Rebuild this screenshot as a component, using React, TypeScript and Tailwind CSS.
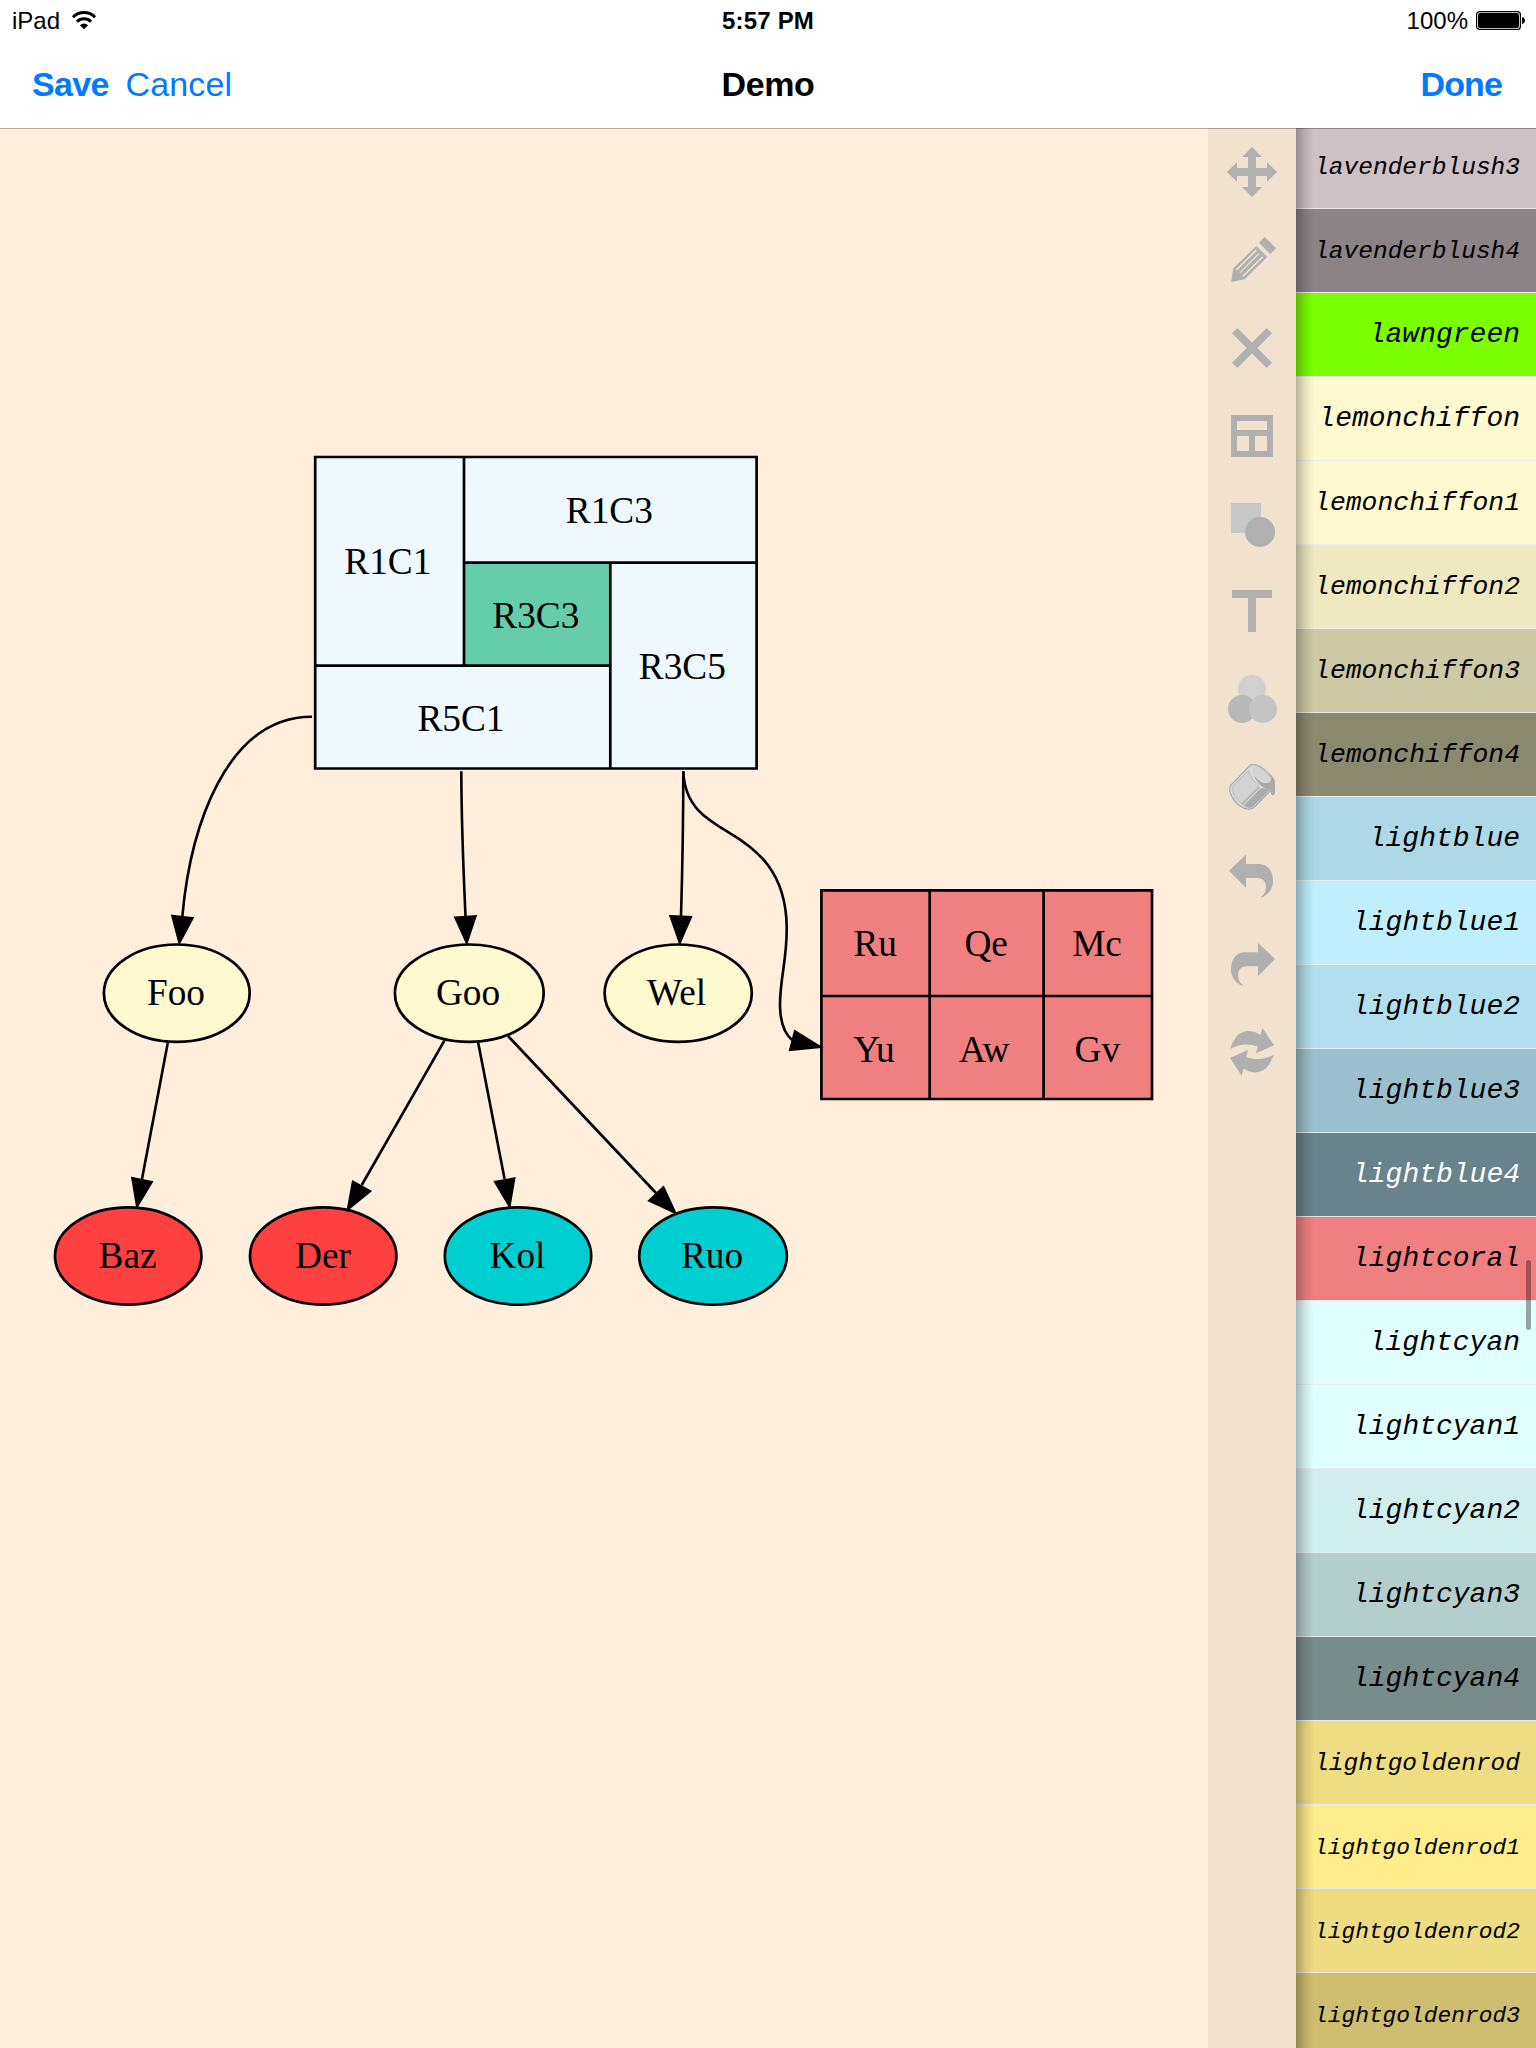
import React from "react";

type Swatch = { name: string; row: string; size: string };

const swatches: Swatch[] = [
  { name: "lavenderblush3", row: "bg-[#cdc1c5] text-black", size: "pt-[4px] text-[24.5px]" },
  { name: "lavenderblush4", row: "bg-[#8b8386] text-black", size: "pt-[4px] text-[24.5px]" },
  { name: "lawngreen", row: "bg-[#7cff00] text-black", size: "pt-px text-[28px]" },
  { name: "lemonchiffon", row: "bg-[#fff9d0] text-black", size: "pt-px text-[28px]" },
  { name: "lemonchiffon1", row: "bg-[#fff9d0] text-black", size: "pt-[3px] text-[26.4px]" },
  { name: "lemonchiffon2", row: "bg-[#eee9bf] text-black", size: "pt-[3px] text-[26.4px]" },
  { name: "lemonchiffon3", row: "bg-[#cdc9a5] text-black", size: "pt-[3px] text-[26.4px]" },
  { name: "lemonchiffon4", row: "bg-[#8b8970] text-black", size: "pt-[3px] text-[26.4px]" },
  { name: "lightblue", row: "bg-[#add8e6] text-black", size: "pt-px text-[28px]" },
  { name: "lightblue1", row: "bg-[#bfefff] text-black", size: "pt-px text-[28px]" },
  { name: "lightblue2", row: "bg-[#b2dfee] text-black", size: "pt-px text-[28px]" },
  { name: "lightblue3", row: "bg-[#9ac0cd] text-black", size: "pt-px text-[28px]" },
  { name: "lightblue4", row: "bg-[#68838b] text-white", size: "pt-px text-[28px]" },
  { name: "lightcoral", row: "bg-[#f08080] text-black", size: "pt-px text-[28px]" },
  { name: "lightcyan", row: "bg-[#e0ffff] text-black", size: "pt-px text-[28px]" },
  { name: "lightcyan1", row: "bg-[#e0ffff] text-black", size: "pt-px text-[28px]" },
  { name: "lightcyan2", row: "bg-[#d1eeee] text-black", size: "pt-px text-[28px]" },
  { name: "lightcyan3", row: "bg-[#b4cdcd] text-black", size: "pt-px text-[28px]" },
  { name: "lightcyan4", row: "bg-[#7a8b8b] text-black", size: "pt-px text-[28px]" },
  { name: "lightgoldenrod", row: "bg-[#eedd82] text-black", size: "pt-[4px] text-[24.5px]" },
  { name: "lightgoldenrod1", row: "bg-[#ffec8b] text-black", size: "pt-[4px] text-[22.9px]" },
  { name: "lightgoldenrod2", row: "bg-[#eedc82] text-black", size: "pt-[4px] text-[22.9px]" },
  { name: "lightgoldenrod3", row: "bg-[#cdbe70] text-black", size: "pt-[4px] text-[22.9px]" },
];

function ToolIcon({ children }: { children: React.ReactNode }) {
  return (
    <button className="block size-[88px] shrink-0">
      <svg viewBox="0 0 88 88" className="block size-full" fill="#b0b0b0">
        {children}
      </svg>
    </button>
  );
}

const undoPath =
  "M21 38.7 38 22.7V32H51C60 32 65.3 39.5 65 49.7C64.6 57.5 60 64 52 65.7C55.5 63.5 58 60 58 54.5C57.7 49 54.5 46 49 46H38V55.7Z";
const cyclePath =
  "M22.3 40.7C26 30 31 23 41 23C46 23 49.5 25.3 52.7 27L54.3 19.7 66 37.3 48 45.3 49.7 38.5C40 35 31 36 22.3 40.7Z";

function Toolbar() {
  return (
    <nav className="flex w-[88px] shrink-0 flex-col bg-[#f1e2d0]">
      <ToolIcon>
        <path d="M44 19 54 29H48V40H59V34.2L69 44 59 53.8V48H48V59H54L44 69 34 59H40V48H29V53.8L19 44 29 34.2V40H40V29H34Z" />
      </ToolIcon>
      <ToolIcon>
        <path d="M56.7 21 68 32.3 62.3 38.3 51 26.7Z" />
        <path d="M48.3 30 59.3 41 36.7 63.3 23 66 25.3 52.3Z" />
        <path
          d="M48.3 34 28.3 54M54.8 40.8 35 60.3"
          stroke="#f1e2d0"
          strokeWidth="1.6"
          fill="none"
        />
        <path d="M51 37.5 31.8 56.8" stroke="#f1e2d0" strokeWidth="1.1" fill="none" />
      </ToolIcon>
      <ToolIcon>
        <path d="M26.7 26.7 61.3 61.3M61.3 26.7 26.7 61.3" stroke="#b0b0b0" strokeWidth="7.5" />
      </ToolIcon>
      <ToolIcon>
        <path
          fillRule="evenodd"
          d="M23 23H65V65H23ZM29 29V38H59V29ZM29 44V59H41V44ZM47 44V59H59V44Z"
        />
      </ToolIcon>
      <ToolIcon>
        <rect x="23" y="23" width="30" height="30" fill="#c7c7c7" />
        <circle cx="52" cy="52" r="15" />
      </ToolIcon>
      <ToolIcon>
        <path d="M24 22H64V30H48V64H40V30H24Z" />
      </ToolIcon>
      <ToolIcon>
        <circle cx="44" cy="33" r="14" fill="#d0d0d0" />
        <circle cx="34" cy="53" r="14" fill="#b9b9b9" />
        <circle cx="55" cy="53" r="14" fill="#c4c4c4" />
      </ToolIcon>
      <ToolIcon>
        <path
          d="M43 20.5 22.5 41.5C19 49.5 30 65.5 41.5 65.2 45 65.2 46 63.5 47.5 62L66 43Z"
          fill="#dcdcdc"
          stroke="#a9a9a9"
          strokeWidth="1.2"
        />
        <path d="M40.5 26.5 25 42C23 48 28.5 55.5 33 59.5L51 41.5C45.5 37.5 42.5 33 40.5 26.5Z" fill="#d3d3d3" stroke="#b2b2b2" strokeWidth=".7" />
        <path d="M51.5 43 34 60.5" stroke="#a9a9a9" strokeWidth="1.2" />
        <path d="M53 44 35.5 61.5C38.5 63.8 42.5 64.8 45 62.8L62.5 45.5Z" fill="#acacac" />
        <path d="M43 20.5C45 36 54 45.5 62 45.5L63 50C64.5 52.5 67 51 67 49V37.5C65 31 54 19.5 43 20.5Z" fill="#aaa" />
        <ellipse cx="53" cy="29.2" rx="12" ry="6.5" transform="rotate(44 53 29.2)" fill="#d4d4d4" stroke="#e2e2e2" strokeWidth=".8" />
        <path d="M43 21C48 19 60 26 66 38" fill="none" stroke="#a5a5a5" strokeWidth="1" />
      </ToolIcon>
      <ToolIcon>
        <path d={undoPath} />
      </ToolIcon>
      <ToolIcon>
        <path d={undoPath} transform="matrix(-1 0 0 1 88 .2)" />
      </ToolIcon>
      <ToolIcon>
        <path d={cyclePath} />
        <path d={cyclePath} transform="rotate(180 44 43.7)" />
      </ToolIcon>
    </nav>
  );
}

const ellipses = [
  { label: "Foo", cx: 176.8, cy: 993.2, rx: 72.9, fill: "#fff9d0", tx: 176 },
  { label: "Goo", cx: 469.3, cy: 993.2, rx: 74.4, fill: "#fff9d0", tx: 468 },
  { label: "Wel", cx: 678.2, cy: 993.2, rx: 73.6, fill: "#fff9d0", tx: 676.6 },
  { label: "Baz", cx: 128.2, cy: 1256, rx: 73.2, fill: "#ff4040", tx: 127.5 },
  { label: "Der", cx: 323.2, cy: 1256, rx: 73.2, fill: "#ff4040", tx: 323 },
  { label: "Kol", cx: 518, cy: 1256, rx: 73.2, fill: "#00ced1", tx: 517.5 },
  { label: "Ruo", cx: 713, cy: 1256, rx: 73.8, fill: "#00ced1", tx: 712 },
];

const cells = [
  { label: "R1C1", x: 387.8, y: 574 },
  { label: "R1C3", x: 609.3, y: 522.8 },
  { label: "R3C3", x: 535.8, y: 627.8 },
  { label: "R3C5", x: 682.3, y: 678.8 },
  { label: "R5C1", x: 461, y: 730.6 },
  { label: "Ru", x: 875.2, y: 955.8 },
  { label: "Qe", x: 986.2, y: 955.8 },
  { label: "Mc", x: 1097, y: 955.8 },
  { label: "Yu", x: 874, y: 1061.8 },
  { label: "Aw", x: 984.3, y: 1061.8 },
  { label: "Gv", x: 1097.4, y: 1061.8 },
];

const edges = [
  "M312 716.7C225 716.7 190 830 182.3 917",
  "M461.3 771.3C461.5 830 463.5 872 465.5 916",
  "M683.3 771.3C683.3 830 682.3 872 681 916",
  "M683.3 771.3C684.5 806 706 819 728.6 832.3C757 849 786 872 786.7 926.7C787.2 960 779.5 980 780 1006.7C780.5 1023 785 1034 792 1040",
  "M167.8 1042.7 142 1179",
  "M444.4 1040.7 361.8 1185",
  "M478.2 1042.7 504.6 1179",
  "M508 1036 656 1193",
];

const arrowheads = [
  "172.4,916 192.4,918.3 179.4,942.5",
  "455.4,917.6 475.4,916.2 466.7,942.5",
  "670.6,916.3 690.8,917.2 679.8,942.5",
  "795,1031.4 790.2,1050 820,1047",
  "132.4,1178.2 151.6,1182 137.1,1206",
  "353,1181.8 370,1191.2 348,1209",
  "495.2,1182 514.2,1178.6 509.5,1206",
  "663.4,1187.4 649.4,1200.6 675,1212.6",
];

function Diagram() {
  return (
    <main className="w-[1208px] shrink-0 bg-[#ffeedb]">
      <svg viewBox="0 128 1208 1920" className="block h-[1920px] w-[1208px]">
        <rect x="315.2" y="457" width="441.4" height="311.5" fill="#f0f8ff" />
        <rect x="464" y="562.7" width="146.3" height="103" fill="#66cdaa" />
        <rect x="821.4" y="890.4" width="330.6" height="208.6" fill="#f08080" />
        <g fill="none" stroke="#000" strokeWidth="2.7">
          <path d="M315.2 457H756.6V768.5H315.2ZM464 457V665.7M464 562.7H756.6M315.2 665.7H610.3M610.3 562.7V768.5" />
          <path d="M821.4 890.4H1152V1099H821.4ZM929.7 890.4V1099M1043.6 890.4V1099M821.4 996H1152" />
        </g>
        <g fill="none" stroke="#000" strokeWidth="2.6">
          {edges.map((d) => (
            <path key={d} d={d} />
          ))}
        </g>
        {ellipses.map((e) => (
          <ellipse key={e.label} cx={e.cx} cy={e.cy} rx={e.rx} ry="48.7" fill={e.fill} stroke="#000" strokeWidth="2.7" />
        ))}
        <g stroke="#000" strokeWidth="2.4">
          {arrowheads.map((p) => (
            <polygon key={p} points={p} />
          ))}
        </g>
        <g textAnchor="middle" className="font-['Liberation_Serif',serif] text-[37.3px]">
          {cells.map((c) => (
            <text key={c.label} x={c.x} y={c.y}>
              {c.label}
            </text>
          ))}
          {ellipses.map((e) => (
            <text key={e.label} x={e.tx} y={e.cy + 12.2}>
              {e.label}
            </text>
          ))}
        </g>
      </svg>
    </main>
  );
}

function Palette() {
  return (
    <aside className="relative w-60 shrink-0 overflow-hidden">
      <ul className="-mt-[3px] flex flex-col">
        {swatches.map((s) => (
          <li
            key={s.name}
            className={`flex h-[84px] shrink-0 items-center justify-end border-b border-[#e8eaf0] pr-4 ${s.row}`}
          >
            <span className={`font-['Liberation_Mono',monospace] italic ${s.size}`}>{s.name}</span>
          </li>
        ))}
      </ul>
      <div className="absolute inset-y-0 left-0 w-[18px] bg-gradient-to-r from-black/28 via-black/10 to-transparent" />
      <div className="absolute right-[5px] top-[1132px] h-[70px] w-[5px] rounded-full bg-black/35" />
    </aside>
  );
}

function StatusBar() {
  return (
    <div className="grid h-10 grid-cols-3 items-center text-2xl leading-10 text-black">
      <div className="flex items-center pl-3">
        <span className="relative top-px">iPad</span>
        <svg viewBox="0 0 26 20" className="ml-[11px] h-5 w-[26px]">
          <path d="M2 7.2A15.5 15.5 0 0 1 24 7.2" fill="none" stroke="#000" strokeWidth="3" />
          <path d="M6 11.6A10 10 0 0 1 20 11.6" fill="none" stroke="#000" strokeWidth="3" />
          <path d="M9 15.2A5.8 5.8 0 0 1 17 15.2L13 19.2Z" />
        </svg>
      </div>
      <div className="relative top-px text-center font-bold tracking-[0.2px]">5:57 PM</div>
      <div className="flex items-center justify-end pr-[11px]">
        <span className="relative top-px">100%</span>
        <svg viewBox="0 0 49 19" className="ml-2 h-[19px] w-[49px]">
          <rect x=".6" y=".6" width="43.8" height="17.8" rx="3" fill="none" stroke="#000" strokeWidth="1.2" />
          <rect x="2" y="2" width="41" height="15" rx="2" />
          <path d="M46 6C50 7 50 12 46 13Z" />
        </svg>
      </div>
    </div>
  );
}

export default function App() {
  return (
    <div className="flex h-[2048px] w-[1536px] flex-col overflow-hidden bg-white font-['Liberation_Sans',Arial,sans-serif]">
      <header className="relative z-10 h-32 shrink-0 shadow-[0_1px_0_rgba(0,0,0,0.3)]">
        <StatusBar />
        <div className="grid h-[88px] grid-cols-3 items-center text-[34px] leading-[88px] text-[#007aff]">
          <div className="flex gap-[17px] pl-8">
            <button className="font-bold tracking-[-0.7px]">Save</button>
            <button className="tracking-[0.1px]">Cancel</button>
          </div>
          <h1 className="text-center font-bold tracking-[-0.4px] text-black">Demo</h1>
          <div className="pr-[34px] text-right">
            <button className="font-bold tracking-[-0.9px]">Done</button>
          </div>
        </div>
      </header>
      <div className="flex h-[1920px] shrink-0">
        <Diagram />
        <Toolbar />
        <Palette />
      </div>
    </div>
  );
}
